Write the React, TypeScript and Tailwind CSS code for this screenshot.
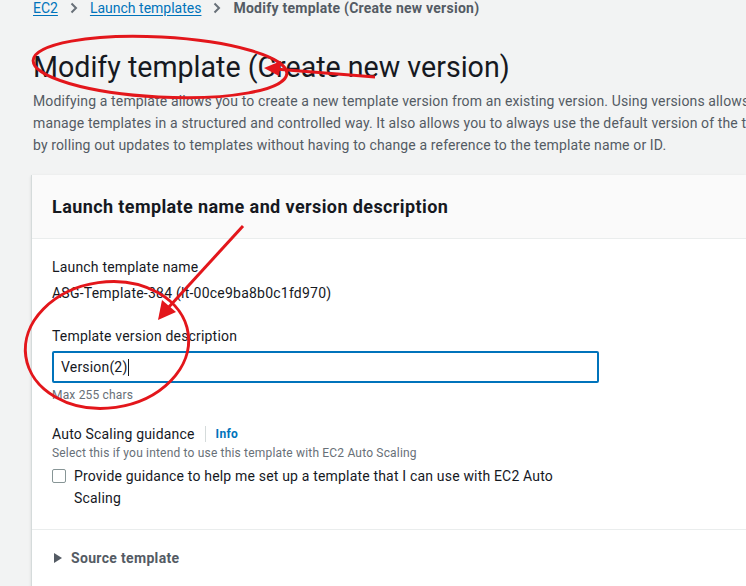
import React from "react";

const font = { fontFamily: "Roboto, 'Noto Sans', sans-serif" };

function Chevron() {
  return (
    <svg width="10" height="12" viewBox="0 0 10 12" className="mx-[11px]">
      <path d="M2.5 1.5 L7 6 L2.5 10.5" fill="none" stroke="#687078" strokeWidth="2" />
    </svg>
  );
}

export default function App() {
  return (
    <div
      className="relative w-[746px] h-[586px] overflow-hidden bg-[#f2f3f3] text-[#16191f] tracking-[0.18px]"
      style={font}
    >
      {/* breadcrumb */}
      <div className="flex items-center h-[16px] pl-[33px] text-[14px] leading-[16px] whitespace-nowrap tracking-normal">
        <span className="text-[#0073bb] underline underline-offset-2">EC2</span>
        <Chevron />
        <span className="text-[#0073bb] underline underline-offset-2">Launch templates</span>
        <Chevron />
        <span className="text-[#545b64] font-bold tracking-[0.25px]">Modify template (Create new version)</span>
      </div>

      {/* title */}
      <div className="pl-[33px] pt-[34px]">
        <h1 className="text-[28.6px] leading-[34px] font-normal whitespace-nowrap tracking-normal">
          Modify template (Create new version)
        </h1>
        <p className="mt-[6px] text-[14px] leading-[22px] text-[#545b64] whitespace-nowrap tracking-[0.13px]">
          Modifying a template allows you to create a new template version from an existing version. Using versions allows you to
          <br />
          manage templates in a structured and controlled way. It also allows you to always use the default version of the template
          <br />
          by rolling out updates to templates without having to change a reference to the template name or ID.
        </p>
      </div>

      {/* card */}
      <div className="ml-[31px] mt-[19px] bg-white border-l border-b border-[#d5dbdb] shadow-sm">
        <div className="bg-[#fafafa] border-b border-[#eaeded] h-[64px] flex items-center pl-[20px]">
          <h2 className="text-[18px] font-bold leading-[22px] tracking-[0.4px]">
            Launch template name and version description
          </h2>
        </div>

        <div className="pl-[20px] pt-[18px] pb-[20px] border-b border-[#eaeded]">
          <div className="text-[14px] leading-[20px]">Launch template name</div>
          <div className="text-[14px] leading-[20px] mt-[6px] tracking-[0.23px]">ASG-Template-384 (lt-00ce9ba8b0c1fd970)</div>

          <div className="text-[14px] leading-[20px] mt-[23px]">Template version description</div>
          <div className="mt-[5px] w-[547px] h-[32px] border-2 border-[#0073bb] rounded-[2px] flex items-center pl-[7px] text-[14px]">
            <span>Version(2)</span>
            <span className="w-px h-[17px] bg-[#16191f] ml-[1px]" />
          </div>
          <div className="text-[12px] leading-[16px] text-[#687078] mt-[4px]">Max 255 chars</div>

          <div className="flex items-center mt-[21px] text-[14px] leading-[20px]">
            <span>Auto Scaling guidance</span>
            <span className="w-px h-[16px] bg-[#d5dbdb] mx-[10px]" />
            <span className="text-[12px] font-bold text-[#0073bb] tracking-[0.3px]">Info</span>
          </div>
          <div className="text-[12px] leading-[16px] text-[#687078] mt-[1px]">
            Select this if you intend to use this template with EC2 Auto Scaling
          </div>
          <div className="flex items-start mt-[4px]">
            <span className="mt-[4px] w-[14px] h-[14px] border border-[#879596] rounded-[2px] bg-white shrink-0" />
            <span className="ml-[8px] w-[500px] text-[14px] leading-[22px]">
              Provide guidance to help me set up a template that I can use with EC2 Auto Scaling
            </span>
          </div>
        </div>

        <div className="h-[56px] flex items-center pl-[22px] text-[#545b64]">
          <svg width="8" height="10" viewBox="0 0 8 10">
            <path d="M0 0 L8 5 L0 10 Z" fill="#545b64" />
          </svg>
          <span className="ml-[9px] text-[14px] font-bold tracking-[0.33px]">Source template</span>
        </div>
      </div>

      {/* red annotations */}
      <svg className="absolute inset-0 pointer-events-none" width="746" height="586" viewBox="0 0 746 586">
        <g fill="none" stroke="#e3161b" strokeWidth="3">
          <ellipse cx="160" cy="67" rx="127" ry="30" transform="rotate(3 160 67)" />
          <line x1="375" y1="77" x2="275" y2="69" />
          <ellipse cx="107" cy="345" rx="82" ry="63" transform="rotate(-8 107 345)" />
          <line x1="243" y1="226" x2="168" y2="308" />
        </g>
        <g fill="#e3161b">
          <polygon points="264,68 281,61 279,76" />
          <polygon points="158,320 162,300 176,312" />
        </g>
      </svg>
    </div>
  );
}
